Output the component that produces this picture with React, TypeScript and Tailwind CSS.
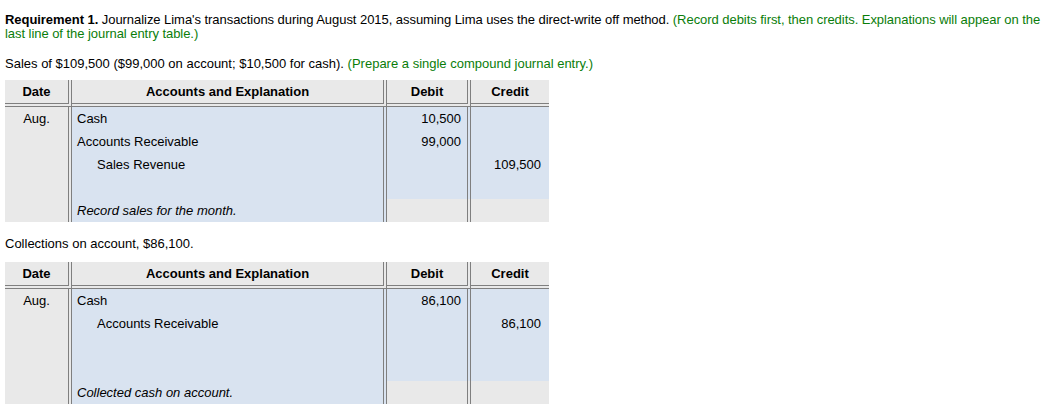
import React from 'react';

type Line = { account?: string; indent?: boolean; debit?: string; credit?: string; note?: boolean };

const sep = 'border-r-4 border-double border-[#7f7f7f]';

const JournalTable: React.FC<{ lines: Line[] }> = ({ lines }) => (
  <div className="grid w-[544px] grid-cols-[67px_315px_84px_78px]">
    <div className={`${sep} border-b-4 bg-[#e9e9e9] h-[27px] flex items-center justify-center font-bold`}>Date</div>
    <div className={`${sep} border-b-4 bg-[#e9e9e9] h-[27px] flex items-center justify-center font-bold`}>
      Accounts and Explanation
    </div>
    <div className={`${sep} border-b-4 bg-[#e9e9e9] h-[27px] flex items-center justify-center font-bold`}>Debit</div>
    <div className="border-b-4 border-double border-[#7f7f7f] bg-[#e9e9e9] h-[27px] flex items-center justify-center font-bold">
      Credit
    </div>
    {lines.map((l, i) => {
      const last = i === lines.length - 1;
      const numBg = last ? 'bg-[#e9e9e9]' : 'bg-[#d9e3f0]';
      return (
        <React.Fragment key={i}>
          <div className={`${sep} bg-[#e9e9e9] h-[23px] flex items-center justify-center`}>{i === 0 ? 'Aug.' : ''}</div>
          <div
            className={`${sep} bg-[#d9e3f0] h-[23px] flex items-center ${l.indent ? 'pl-[25px]' : 'pl-[5px]'} ${
              l.note ? 'italic' : ''
            }`}
          >
            {l.account}
          </div>
          <div className={`${sep} ${numBg} h-[23px] flex items-center justify-end pr-[6px]`}>{l.debit}</div>
          <div className={`${numBg} h-[23px] flex items-center justify-end pr-[8px]`}>{l.credit}</div>
        </React.Fragment>
      );
    })}
  </div>
);

export default function App() {
  return (
    <div className="bg-white min-h-[414px] pl-[5px] pt-[13px] text-[13px] leading-[14px] text-black font-['Liberation_Sans',Arial,sans-serif]">
      <p className="w-[1046px] tracking-[-0.05px]">
        <span className="font-bold">Requirement 1.</span> Journalize Lima's transactions during August 2015, assuming
        Lima uses the direct-write off method.{' '}
        <span className="text-[#0a7d0a]">
          (Record debits first, then credits. Explanations will appear on the last line of the journal entry table.)
        </span>
      </p>
      <p className="mt-[16px]">
        Sales of $109,500 ($99,000 on account; $10,500 for cash).{' '}
        <span className="text-[#0a7d0a]">(Prepare a single compound journal entry.)</span>
      </p>
      <div className="mt-[9px]">
        <JournalTable
          lines={[
            { account: 'Cash', debit: '10,500' },
            { account: 'Accounts Receivable', debit: '99,000' },
            { account: 'Sales Revenue', indent: true, credit: '109,500' },
            {},
            { account: 'Record sales for the month.', note: true },
          ]}
        />
      </div>
      <p className="mt-[15px]">Collections on account, $86,100.</p>
      <div className="mt-[11px]">
        <JournalTable
          lines={[
            { account: 'Cash', debit: '86,100' },
            { account: 'Accounts Receivable', indent: true, credit: '86,100' },
            {},
            {},
            { account: 'Collected cash on account.', note: true },
          ]}
        />
      </div>
    </div>
  );
}
